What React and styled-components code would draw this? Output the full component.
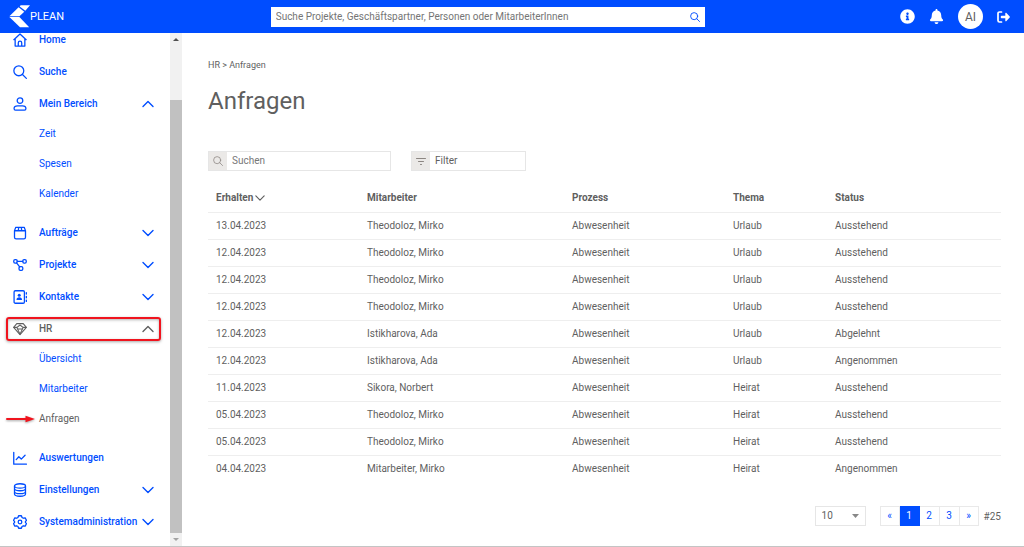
import React from "react";
import styled, { createGlobalStyle, css } from "styled-components";
import { FaInfoCircle, FaBell } from "react-icons/fa";

const BLUE = "#004dff";
const TEXT = "#5f5f5f";

const GlobalStyle = createGlobalStyle`
  *, *::before, *::after { box-sizing: border-box; }
  body {
    margin: 0;
    background: #fff;
    color: ${TEXT};
    font: 10px/14px Roboto, "Liberation Sans", sans-serif;
  }
  a { color: inherit; text-decoration: none; }
  button, input, select { font: inherit; color: inherit; }
  button { cursor: pointer; }
`;

const Page = styled.div`
  display: flex;
  flex-direction: column;
  height: 100vh;
  border-bottom: 1px solid #c4c4c4;
`;

const Header = styled.header`
  flex: none;
  display: grid;
  grid-template-columns: 6fr minmax(200px, 434px) 7fr;
  align-items: center;
  height: 33px;
  padding: 0 14px 0 9px;
  background: ${BLUE};
  color: #fff;
`;

const Brand = styled.a`
  display: flex;
  align-items: center;
  font-size: 11px;
`;

const GlobalSearch = styled.form`
  display: flex;
  align-items: center;
  height: 20px;
  background: #fff;
`;

const GlobalInput = styled.input`
  flex: 1;
  min-width: 0;
  height: 20px;
  padding: 0 5px;
  border: 0;
  background: none;
  color: ${TEXT};
  &::placeholder { color: #757575; opacity: 1; }
`;

const IconButton = styled.button`
  display: flex;
  padding: 0;
  border: 0;
  background: none;
  color: ${(p) => p.$color || "#fff"};
`;

const SearchButton = styled(IconButton)`
  padding: 0 5px;
`;

const HeaderActions = styled.div`
  display: flex;
  justify-content: flex-end;
  align-items: center;
  gap: 14px;
`;

const Avatar = styled.button`
  width: 25px;
  height: 25px;
  padding: 0;
  border: 0;
  border-radius: 50%;
  background: #fff;
  color: ${TEXT};
  font-size: 12px;
`;

const Body = styled.div`
  flex: 1;
  display: flex;
  min-height: 0;
`;

const Sidebar = styled.aside`
  flex: none;
  display: flex;
  width: 182px;
  overflow: hidden;
`;

const Nav = styled.nav`
  flex: 1;
  display: flex;
  flex-direction: column;
  gap: 4px;
  margin-top: -7px;
  padding: 0 9px 0 6px;
  color: ${BLUE};
`;

const NavItem = styled.a`
  position: relative;
  display: flex;
  align-items: center;
  height: 28px;
  padding: 0 7px;
  font-weight: 500;
  white-space: nowrap;
  ${(p) =>
    p.$marked &&
    css`
      color: ${TEXT};
      &::after {
        content: "";
        position: absolute;
        inset: 2px 0;
        border: 2px solid #f0141e;
        border-radius: 3px;
        box-shadow: 0 1px 3px rgba(0, 0, 0, 0.35), inset 0 1px 3px rgba(0, 0, 0, 0.3);
      }
    `}
`;

const NavLabel = styled.span`
  flex: 1;
  margin-left: 12px;
`;

const SubList = styled.div`
  display: flex;
  flex-direction: column;
  margin-top: -3px;
  padding-bottom: 6px;
`;

const SubItem = styled.a`
  position: relative;
  display: flex;
  align-items: center;
  height: 30px;
  padding-left: 33px;
  color: ${(p) => (p.$active ? TEXT : BLUE)};
`;

const Pointer = styled.svg`
  position: absolute;
  left: 0;
  top: 10px;
  overflow: visible;
  filter: drop-shadow(0 1px 1px rgba(0, 0, 0, 0.35));
`;

const ScrollTrack = styled.div`
  display: flex;
  flex-direction: column;
  align-items: center;
  width: 12px;
  background: #f1f1f1;
`;

const ScrollThumb = styled.div`
  flex: 1;
  width: 12px;
  margin: 54px 0 0;
  background: #c1c1c1;
`;

const ScrollArrow = styled.svg`
  flex: none;
  width: 12px;
  height: 13px;
`;

const Main = styled.main`
  flex: 1;
  min-width: 0;
  padding: 25px 23px 0 26px;
  overflow: auto;
`;

const Breadcrumb = styled.nav`
  font-size: 9px;
`;

const Title = styled.h1`
  margin: 13px 0 34px;
  font-size: 24px;
  line-height: 32px;
  font-weight: 400;
`;

const Toolbar = styled.div`
  display: flex;
  gap: 20px;
`;

const Field = styled.div`
  display: flex;
  width: ${(p) => p.$width};
  height: 20px;
  border: 1px solid #e6e6e6;
`;

const Addon = styled.label`
  flex: none;
  display: flex;
  align-items: center;
  justify-content: center;
  width: 18px;
  background: #ebe9e7;
  color: #8c8682;
`;

const FieldInput = styled.input`
  flex: 1;
  min-width: 0;
  padding: 0 5px;
  border: 0;
  &::placeholder { color: ${(p) => p.$hint || "#777"}; opacity: 1; }
`;

const Table = styled.table`
  width: 100%;
  margin-top: 14px;
  table-layout: fixed;
  border-collapse: collapse;
`;

const Cell = styled.td`
  height: 27px;
  padding: 0 8px;
  border-bottom: 1px solid #eee;
  text-align: left;
  tbody tr:last-child > & { border-bottom-color: transparent; }
`;

const HeadCell = styled(Cell)`
  font-weight: 700;
`;

const SortButton = styled.button`
  display: flex;
  align-items: center;
  gap: 2px;
  padding: 0;
  border: 0;
  background: none;
`;

const Footer = styled.div`
  display: flex;
  justify-content: flex-end;
  align-items: center;
  margin-top: 23px;
`;

const SizeBox = styled.div`
  position: relative;
  width: 51px;
  margin-right: 14px;
`;

const SizeSelect = styled.select`
  display: block;
  width: 100%;
  height: 20px;
  padding: 0 6px;
  border: 1px solid #e6e6e6;
  border-radius: 0;
  background: #fff;
  appearance: none;
`;

const Caret = styled.svg`
  position: absolute;
  right: 7px;
  top: 8px;
  pointer-events: none;
`;

const Pages = styled.div`
  display: flex;
  border: solid #e9e9e9;
  border-width: 0 0 0 1px;
`;

const PageButton = styled.button`
  width: ${(p) => (p.$edge ? "19px" : "20px")};
  height: 20px;
  padding: 0;
  border: solid ${(p) => (p.$current ? BLUE : "#e9e9e9")};
  border-width: 1px 1px 1px 0;
  background: ${(p) => (p.$current ? BLUE : "#fff")};
  color: ${(p) => (p.$current ? "#fff" : BLUE)};
`;

const Total = styled.span`
  margin-left: 5px;
  padding-top: 2px;
`;

const Stroke = ({ size = 14, width = 1.2, box = 13, children, ...rest }) => (
  <svg
    width={size}
    height={size}
    viewBox={`0 0 ${box} ${box}`}
    fill="none"
    stroke="currentColor"
    strokeWidth={width}
    strokeLinecap="round"
    strokeLinejoin="round"
    aria-hidden="true"
    {...rest}
  >
    {children}
  </svg>
);

const icons = {
  home: (
    <path d="M.8 6.2 6.5.9l5.700 5.300M2 5.200v6.900h9V5.200M4.900 12V9.200a1.600 1.600 0 0 1 3.200 0V12" />
  ),
  search: (
    <>
      <circle cx="5.400" cy="5.400" r="4.600" />
      <path d="m8.800 8.800 3.600 3.600" />
    </>
  ),
  person: (
    <>
      <circle cx="6.500" cy="3.400" r="2.600" />
      <path d="M4.200 8.200h4.600c2 0 3.200 1 3.200 2.500 0 .9-.5 1.500-1.300 1.500H2.300c-.8 0-1.300-.6-1.300-1.500 0-1.500 1.200-2.500 3.200-2.500z" />
    </>
  ),
  box: (
    <path d="M1.400 4.300 2.600 1.200h7.800l1.200 3.100v6.200c0 .9-.6 1.500-1.500 1.500H2.900c-.9 0-1.500-.6-1.500-1.500zM1.400 4.400h10.200M4.900 4.300l.4-3.100M8.100 4.300l-.4-3.100" />
  ),
  nodes: (
    <>
      <rect x=".7" y="1.500" width="3.200" height="3.200" rx="1.200" />
      <rect x="9.100" y="1.500" width="3.200" height="3.200" rx="1.200" />
      <rect x="5.600" y="8" width="3.500" height="3.500" rx="1.200" />
      <path d="M3.900 3.100h5.200M3.300 4.600 6.200 8.200" />
    </>
  ),
  contacts: (
    <>
      <rect x="1" y=".7" width="9.600" height="11.600" rx="1.200" />
      <path d="M12.400 2.500v1.200M12.400 6v1.200M12.400 9.400v1.200" />
      <circle cx="5.800" cy="4.800" r="1.400" fill="currentColor" stroke="none" />
      <path d="M3.200 9.200c0-1.600 1-2.400 2.600-2.400s2.600.8 2.600 2.400z" fill="currentColor" stroke="none" />
    </>
  ),
  gem: (
    <g strokeWidth="1">
      <path d="M3.500 1.500h6L12.400 5 6.500 11.700.6 5z" />
      <path d="M.8 5h2.900l2.800-2.200L9.300 5h2.900M3.700 5l.5 1.500h4.600L9.300 5M4.300 6.600l2.200 4.800 2.200-4.800" />
    </g>
  ),
  chart: <path d="M.7 1.200v11h11.800M3 8l2.400-2.700 2.300 2.200 3.500-3.600" />,
  database: (
    <>
      <ellipse cx="6.500" cy="2.700" rx="5.100" ry="2" />
      <path d="M1.400 2.700v7.600c0 1.100 2.300 2 5.100 2s5.100-.9 5.100-2V2.700M1.400 5.200c0 1.100 2.300 2 5.100 2s5.100-.9 5.100-2M1.400 7.800c0 1.100 2.300 2 5.100 2s5.100-.9 5.100-2" />
    </>
  ),
  gear: (
    <>
      <path d="M5.200.7h2.600l.6 1.600 1.200.7 1.700-.3 1.200 2.200-1 1.300v.6l1 1.300-1.200 2.200-1.700-.3-1.200.7-.6 1.600H5.200l-.6-1.600-1.200-.7-1.700.3L.5 8.100l1-1.300v-.6l-1-1.300 1.200-2.200 1.700.3 1.200-.7z" />
      <circle cx="6.500" cy="6.500" r="1.700" />
    </>
  ),
};

const Chevron = ({ up, size = 12, ...rest }) => (
  <Stroke size={size} box={12} width={1.4} {...rest}>
    <path d={up ? "M1 8.500 6 3.500l5 5" : "M1 3.500l5 5 5-5"} />
  </Stroke>
);

const LogoutIcon = () => (
  <svg width="13" height="12" viewBox="0 0 13 12" fill="none" aria-hidden="true">
    <path d="M4.500 1H2.500C1.600 1 1 1.600 1 2.500v7c0 .9.600 1.500 1.500 1.500h2" stroke="currentColor" strokeWidth="1.700" strokeLinecap="round" />
    <path d="M4.500 4.700h3.800V2.200c0-.5.500-.7.900-.4l3.500 3.700c.300.300.300.700 0 1L9.200 10.200c-.4.300-.9.100-.9-.4V7.300H4.500c-.4 0-.7-.3-.7-.7V5.400c0-.4.300-.7.700-.7z" fill="currentColor" />
  </svg>
);

const Logo = () => (
  <svg width="21" height="23" viewBox="0 0 21 23" fill="currentColor" aria-hidden="true">
    <path d="M.4 11.200 9.600 2.300l5.700 4.400-4.900 4.500z" />
    <path d="M.4 12h10L20.200 22.300H11z" />
    <path d="M11.600.3H21l-4.700 5.500-5.600-4.300z" />
  </svg>
);

const navigation = [
  { label: "Home", icon: "home" },
  { label: "Suche", icon: "search" },
  { label: "Mein Bereich", icon: "person", open: true, items: ["Zeit", "Spesen", "Kalender"] },
  { label: "Aufträge", icon: "box", items: [] },
  { label: "Projekte", icon: "nodes", items: [] },
  { label: "Kontakte", icon: "contacts", items: [] },
  { label: "HR", icon: "gem", open: true, marked: true, items: ["Übersicht", "Mitarbeiter", "Anfragen"] },
  { label: "Auswertungen", icon: "chart" },
  { label: "Einstellungen", icon: "database", items: [] },
  { label: "Systemadministration", icon: "gear", items: [] },
];

const requests = [
  ["13.04.2023", "Theodoloz, Mirko", "Abwesenheit", "Urlaub", "Ausstehend"],
  ["12.04.2023", "Theodoloz, Mirko", "Abwesenheit", "Urlaub", "Ausstehend"],
  ["12.04.2023", "Theodoloz, Mirko", "Abwesenheit", "Urlaub", "Ausstehend"],
  ["12.04.2023", "Theodoloz, Mirko", "Abwesenheit", "Urlaub", "Ausstehend"],
  ["12.04.2023", "Istikharova, Ada", "Abwesenheit", "Urlaub", "Abgelehnt"],
  ["12.04.2023", "Istikharova, Ada", "Abwesenheit", "Urlaub", "Angenommen"],
  ["11.04.2023", "Sikora, Norbert", "Abwesenheit", "Heirat", "Ausstehend"],
  ["05.04.2023", "Theodoloz, Mirko", "Abwesenheit", "Heirat", "Ausstehend"],
  ["05.04.2023", "Theodoloz, Mirko", "Abwesenheit", "Heirat", "Ausstehend"],
  ["04.04.2023", "Mitarbeiter, Mirko", "Abwesenheit", "Heirat", "Angenommen"],
];

const columnWidths = [151, 205, 161, 102, 174];

const NavGroup = ({ entry }) => (
  <>
    <NavItem href="#" $marked={entry.marked}>
      <Stroke>{icons[entry.icon]}</Stroke>
      <NavLabel>{entry.label}</NavLabel>
      {entry.items && <Chevron up={entry.open} />}
    </NavItem>
    {entry.open && (
      <SubList>
        {entry.items.map((item) => (
          <SubItem key={item} href="#" $active={item === "Anfragen"}>
            {item === "Anfragen" && (
              <Pointer width="29" height="10" viewBox="0 0 29 10" aria-hidden="true">
                <path d="M1 5h20" stroke="#f0141e" strokeWidth="2" strokeLinecap="round" />
                <path d="M19.500 1.800 29 5l-9.500 3.200z" fill="#f0141e" />
              </Pointer>
            )}
            {item}
          </SubItem>
        ))}
      </SubList>
    )}
  </>
);

export default function App() {
  return (
    <Page>
      <GlobalStyle />
      <Header>
        <Brand href="#">
          <Logo />
          PLEAN
        </Brand>
        <GlobalSearch role="search">
          <GlobalInput
            aria-label="Suche"
            placeholder="Suche Projekte, Geschäftspartner, Personen oder MitarbeiterInnen"
          />
          <SearchButton type="button" aria-label="Suchen" $color={BLUE}>
            <Stroke size={10}>{icons.search}</Stroke>
          </SearchButton>
        </GlobalSearch>
        <HeaderActions>
          <IconButton aria-label="Info"><FaInfoCircle size={15} /></IconButton>
          <IconButton aria-label="Benachrichtigungen"><FaBell size={15} /></IconButton>
          <Avatar aria-label="Profil">AI</Avatar>
          <IconButton aria-label="Abmelden"><LogoutIcon /></IconButton>
        </HeaderActions>
      </Header>
      <Body>
        <Sidebar>
          <Nav aria-label="Hauptnavigation">
            {navigation.map((entry) => (
              <NavGroup key={entry.label} entry={entry} />
            ))}
          </Nav>
          <ScrollTrack aria-hidden="true">
            <ScrollArrow viewBox="0 0 12 13"><path d="M3 8h6L6 5z" fill="#505050" /></ScrollArrow>
            <ScrollThumb />
            <ScrollArrow viewBox="0 0 12 13"><path d="M3 5h6L6 8z" fill="#a3a3a3" /></ScrollArrow>
          </ScrollTrack>
        </Sidebar>
        <Main>
          <Breadcrumb aria-label="Pfad">
            <a href="#">HR</a> &gt; <a href="#">Anfragen</a>
          </Breadcrumb>
          <Title>Anfragen</Title>
          <Toolbar>
            <Field $width="183px">
              <Addon htmlFor="search" aria-label="Suchen">
                <Stroke size={10} width={1}>{icons.search}</Stroke>
              </Addon>
              <FieldInput id="search" placeholder="Suchen" />
            </Field>
            <Field $width="115px">
              <Addon htmlFor="filter" aria-label="Filter">
                <Stroke size={10} box={10} width={1}>
                  <path d="M.5 2.500h9M2.500 5.500h5M4.500 8.500h1" />
                </Stroke>
              </Addon>
              <FieldInput id="filter" placeholder="Filter" $hint={TEXT} />
            </Field>
          </Toolbar>
          <Table>
            <colgroup>
              {columnWidths.map((w) => <col key={w} width={w} />)}
            </colgroup>
            <thead>
              <tr>
                <HeadCell as="th" scope="col">
                  <SortButton>Erhalten <Chevron size={10} /></SortButton>
                </HeadCell>
                {["Mitarbeiter", "Prozess", "Thema", "Status"].map((name) => (
                  <HeadCell as="th" scope="col" key={name}>{name}</HeadCell>
                ))}
              </tr>
            </thead>
            <tbody>
              {requests.map((row, i) => (
                <tr key={i}>
                  {row.map((value, j) => <Cell key={j}>{value}</Cell>)}
                </tr>
              ))}
            </tbody>
          </Table>
          <Footer>
            <SizeBox>
              <SizeSelect aria-label="Einträge pro Seite" defaultValue="10">
                <option>10</option>
                <option>25</option>
              </SizeSelect>
              <Caret width="7" height="4" viewBox="0 0 7 4" aria-hidden="true">
                <path d="M0 0h7L3.500 4z" fill="#888" />
              </Caret>
            </SizeBox>
            <Pages>
              <PageButton $edge aria-label="Zurück">«</PageButton>
              <PageButton $current>1</PageButton>
              <PageButton>2</PageButton>
              <PageButton>3</PageButton>
              <PageButton $edge aria-label="Weiter">»</PageButton>
            </Pages>
            <Total>#25</Total>
          </Footer>
        </Main>
      </Body>
    </Page>
  );
}
